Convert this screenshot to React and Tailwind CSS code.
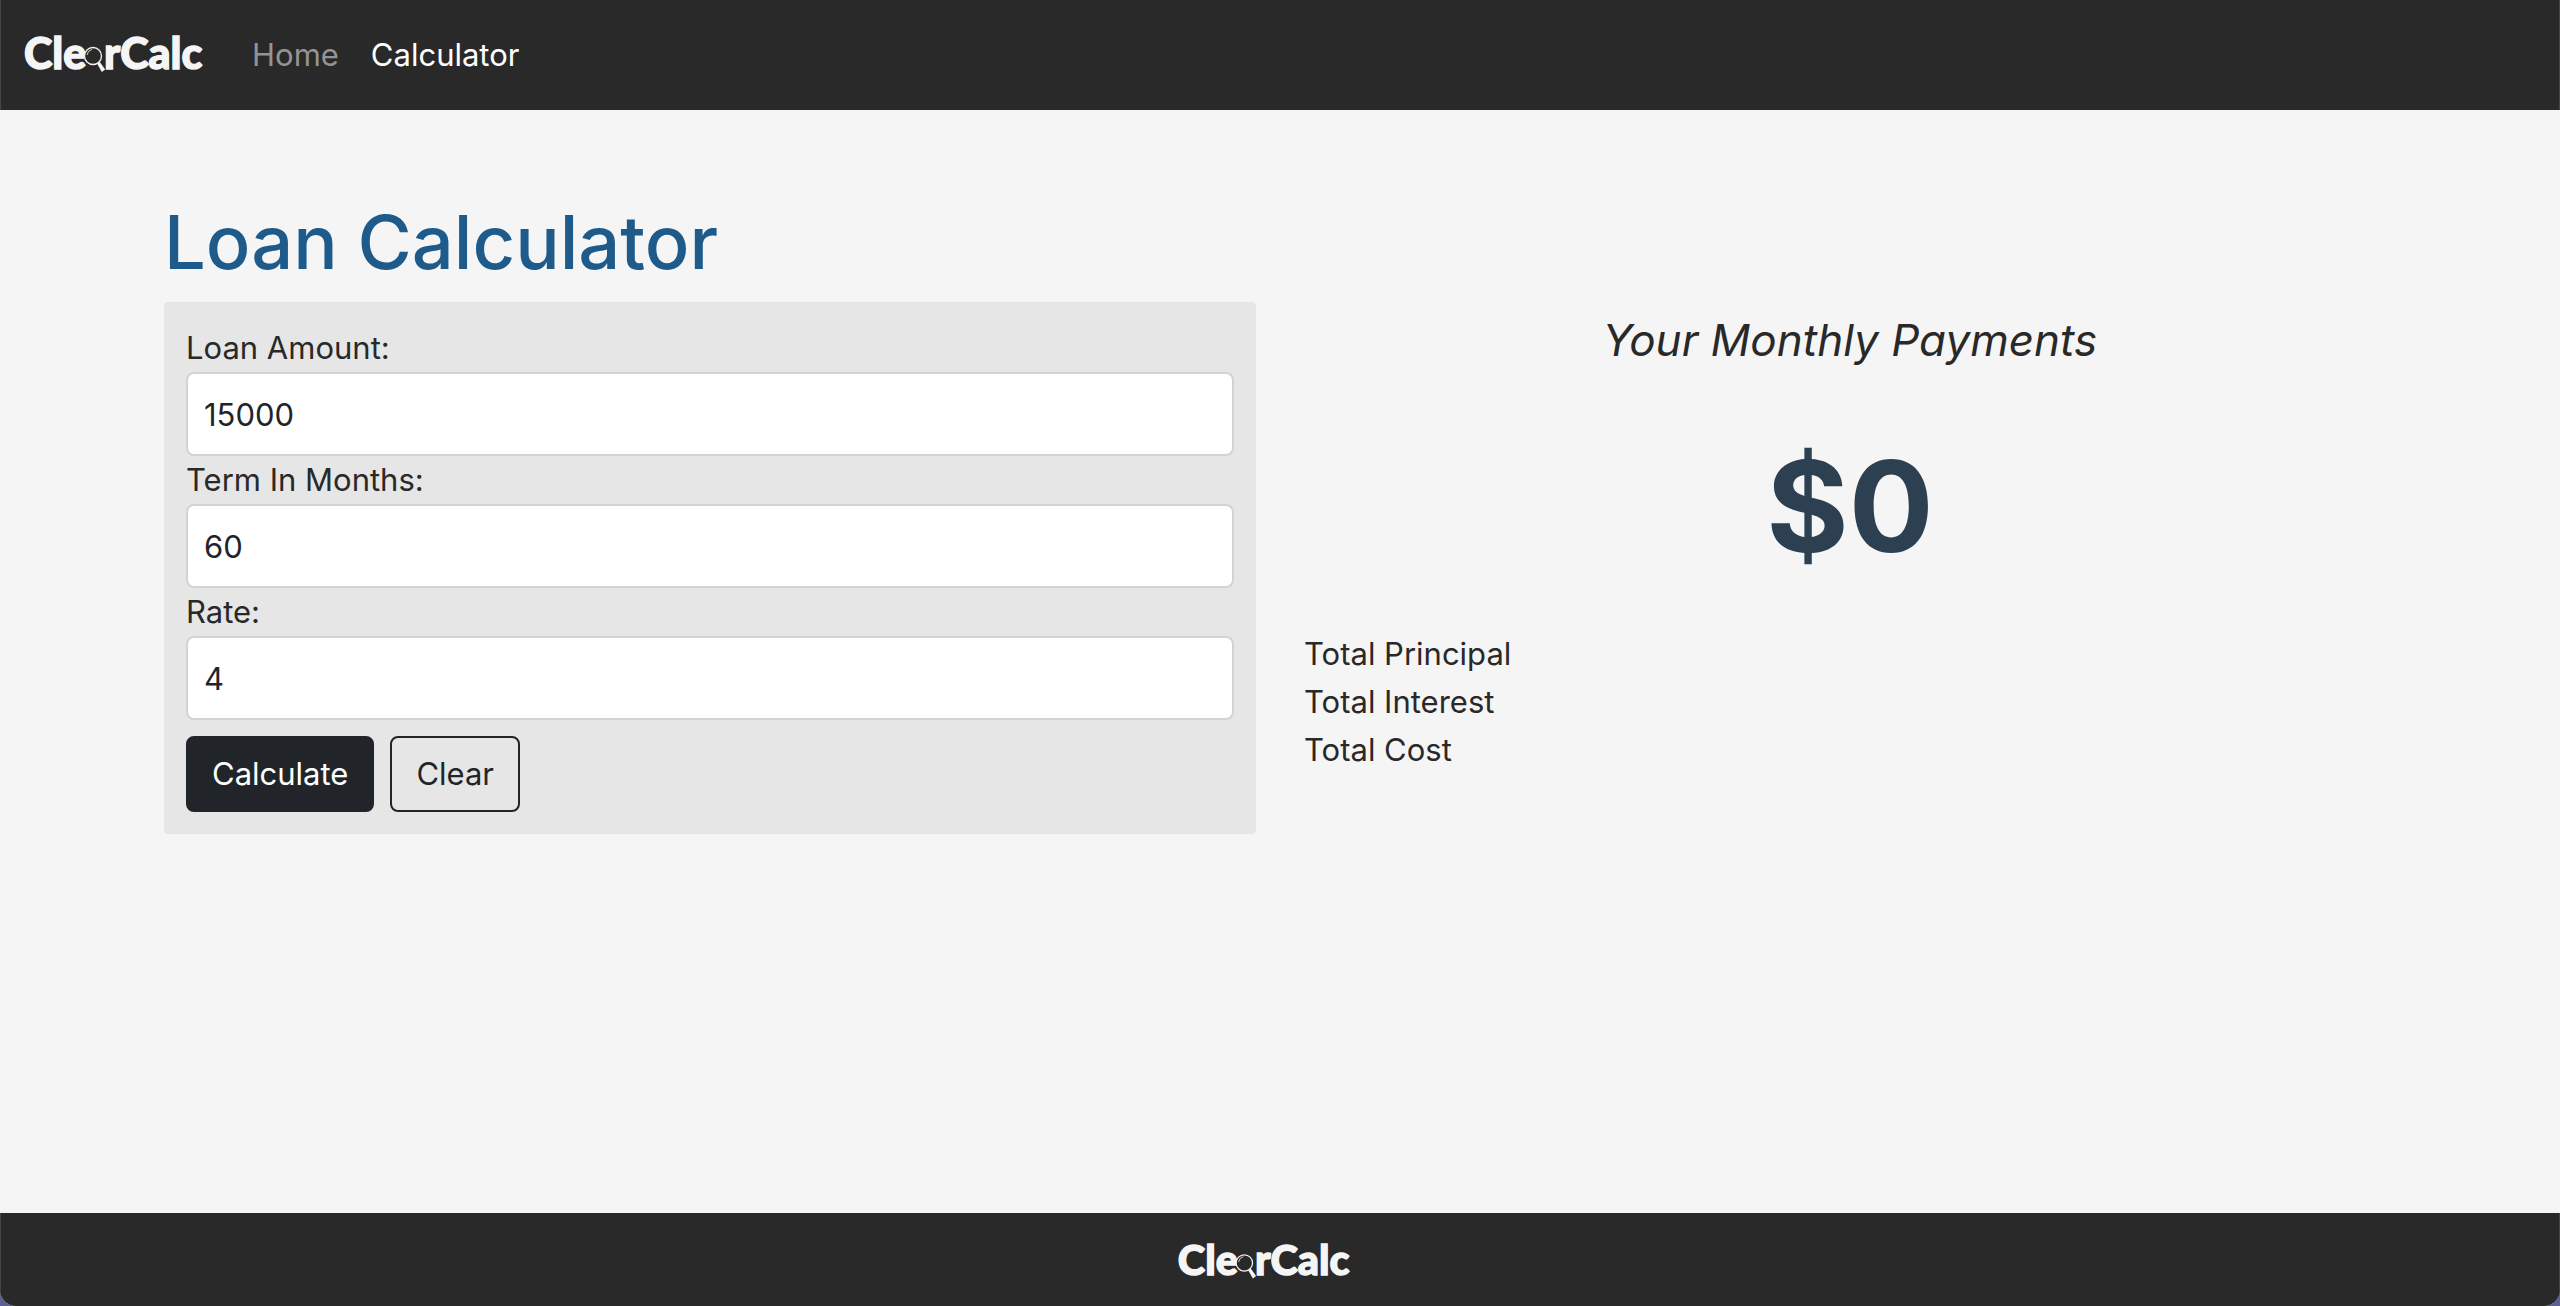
import { useState } from "react";

const FIELDS = [
  { id: "amount", label: "Loan Amount:" },
  { id: "term", label: "Term In Months:" },
  { id: "rate", label: "Rate:" },
];

function Logo({ className }) {
  return (
    <svg viewBox="-4 0 220 64" className={className} role="img" aria-label="ClearCalc" fill="#f5f5f5">
      <g
        fontFamily="Lato, sans-serif"
        fontWeight="900"
        fontSize="43"
        stroke="#f5f5f5"
        strokeWidth="1.4"
      >
        <text x="0" y="46">Cle</text>
        <text x="80" y="46">rCalc</text>
      </g>
      <circle cx="69" cy="33" r="8.5" fill="#292929" stroke="#f5f5f5" strokeWidth="1.3" />
      <path d="M63 32a6.500 6.500 0 0 1 5-5.500" fill="none" stroke="#f5f5f5" strokeWidth="0.8" />
      <path d="M73 40.500l2.800-1.600 5.400 7.600-3.400 2.500z" />
    </svg>
  );
}

export default function App() {
  const [values, setValues] = useState({ amount: "15000", term: "60", rate: "4" });
  const [result, setResult] = useState(null);

  function calculate(event) {
    event.preventDefault();
    const principal = Number(values.amount);
    const months = Number(values.term);
    const r = Number(values.rate) / 1200;
    if (!principal || !months) return;
    const payment = r ? (principal * r) / (1 - (1 + r) ** -months) : principal / months;
    const cost = payment * months;
    setResult({ payment, principal, interest: cost - principal, cost });
  }

  function clear() {
    setValues({ amount: "", term: "", rate: "" });
    setResult(null);
  }

  const money = (key) => (result ? "$" + result[key].toFixed(2) : "");

  return (
    <div className="min-h-screen bg-[#5b5f96] font-['Inter',sans-serif] text-[31px] leading-12 text-[#292929]">
      <div className="flex min-h-screen flex-col overflow-hidden rounded-b-2xl bg-[#f5f5f5]">
        <header className="flex h-[110px] items-center border-x border-[#444] bg-[#292929] px-[19px]">
          <a href="#home">
            <Logo className="h-16 w-[220px]" />
          </a>
          <nav className="ml-3 flex gap-8">
            <a href="#home" className="text-[#949494]">Home</a>
            <a href="#calculator" className="text-white">Calculator</a>
          </nav>
        </header>

        <main className="mx-auto w-full max-w-[2280px] grow px-6 pt-21">
          <h1 className="mb-3 text-[74px] leading-24 font-medium text-[#1e5a8a]">Loan Calculator</h1>
          <div className="grid grid-cols-2 gap-12">
            <form onSubmit={calculate} className="rounded-sm bg-[#e6e6e6] p-[22px]">
              {FIELDS.map((field) => (
                <div key={field.id}>
                  <label htmlFor={field.id} className="block">{field.label}</label>
                  <input
                    id={field.id}
                    value={values[field.id]}
                    onChange={(e) => setValues({ ...values, [field.id]: e.target.value })}
                    className="block h-[84px] w-full rounded-lg border-2 border-[#ced4da] bg-white px-4 text-[#212529]"
                  />
                </div>
              ))}
              <div className="mt-4 flex gap-4">
                <button type="submit" className="h-[76px] rounded-lg border-2 border-[#212529] bg-[#212529] px-6 text-white">
                  Calculate
                </button>
                <button type="button" onClick={clear} className="h-[76px] rounded-lg border-2 border-[#212529] px-6 text-[#212529]">
                  Clear
                </button>
              </div>
            </form>

            <section>
              <h2 className="pt-2 text-center text-[44px] leading-[60px] italic">Your Monthly Payments</h2>
              <p className="mt-10 text-center text-[126px] leading-48 font-bold text-[#2c4052]">
                {result ? money("payment") : "$0"}
              </p>
              <dl className="mt-7 grid grid-cols-2">
                <dt>Total Principal</dt>
                <dd>{money("principal")}</dd>
                <dt>Total Interest</dt>
                <dd>{money("interest")}</dd>
                <dt>Total Cost</dt>
                <dd>{money("cost")}</dd>
              </dl>
            </section>
          </div>
        </main>

        <footer className="flex h-[93px] items-center justify-center border-x border-[#444] bg-[#292929] pt-1">
          <Logo className="h-[62px] w-[212px]" />
        </footer>
      </div>
    </div>
  );
}
